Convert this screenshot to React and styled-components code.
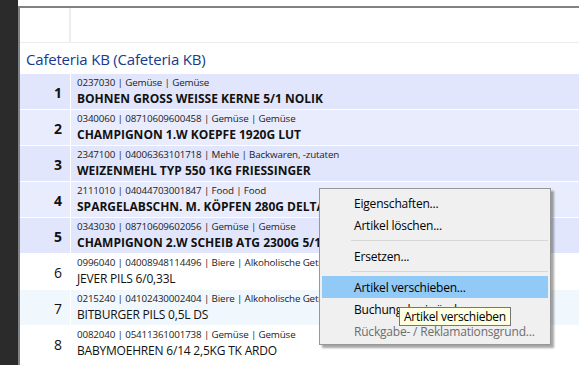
import styled, { createGlobalStyle } from 'styled-components'

const GlobalStyle = createGlobalStyle`
  html, body {
    margin: 0;
    padding: 0;
    height: 100%;
    overflow: hidden;
  }
  body {
    background: #ffffff;
    font-family: 'Open Sans', 'Noto Sans', sans-serif;
  }
`

const Page = styled.div`
  display: flex;
  width: 579px;
  height: 365px;
  overflow: hidden;
  position: relative;
`

const Sidebar = styled.div`
  width: 18px;
  flex-shrink: 0;
  background: #2b2b2b;
`

const Panel = styled.div`
  flex: 1;
  padding-top: 6px;
  background: #ffffff;
  min-width: 0;
`

const Frame = styled.div`
  border-top: 2px solid #7f8386;
  border-left: 2px solid #7f8386;
  height: 100%;
`

const HeaderRow = styled.div`
  display: grid;
  grid-template-columns: 51px 1fr;
  height: 34px;
  border-bottom: 1px solid #ececec;
`

const HeaderCell = styled.div`
  border-right: ${p => (p.$divider ? '2px solid #ececec' : 'none')};
`

const Title = styled.div`
  height: 31px;
  display: flex;
  align-items: center;
  padding-left: 6px;
  padding-top: 1px;
  box-sizing: border-box;
  font-size: 15px;
  color: #183a8c;
  letter-spacing: -0.2px;
`

const Row = styled.div`
  display: grid;
  grid-template-columns: 51px 1fr;
  height: 35px;
  border-bottom: 1px solid #ffffff;
  background: ${p => p.$bg};
`

const Num = styled.div`
  display: flex;
  align-items: center;
  justify-content: flex-end;
  padding-right: 8px;
  padding-top: 2px;
  font-size: 14px;
  font-weight: ${p => (p.$bold ? 700 : 400)};
  color: #111;
  border-right: 1px solid #ffffff;
`

const Content = styled.div`
  display: flex;
  flex-direction: column;
  justify-content: center;
  padding-left: 6px;
  white-space: nowrap;
  overflow: hidden;
`

const Code = styled.div`
  font-size: 9.8px;
  line-height: 14px;
  color: #222;
  letter-spacing: -0.15px;
`

const Name = styled.div`
  font-size: 12px;
  line-height: 17px;
  font-weight: ${p => (p.$bold ? 700 : 400)};
  color: #111;
  letter-spacing: ${p => (p.$bold ? '0px' : '-0.2px')};
`

const Menu = styled.div`
  position: absolute;
  left: 319px;
  top: 188px;
  width: 226px;
  padding: 3px 2px 2px;
  background: #f0f0f0;
  border: 1px solid #979797;
  box-shadow: 3px 3px 2px rgba(0, 0, 0, 0.35);
`

const MenuItem = styled.div`
  height: 22px;
  display: flex;
  align-items: center;
  padding-left: 32px;
  font-size: 12px;
  letter-spacing: -0.2px;
  color: ${p => (p.$disabled ? '#6d6d6d' : '#000')};
  background: ${p => (p.$active ? '#91c9f7' : 'transparent')};
  white-space: nowrap;
`

const Separator = styled.div`
  height: 9px;
  display: flex;
  align-items: center;
  padding-left: 29px;

  &::after {
    content: '';
    flex: 1;
    height: 1px;
    background: #d7d7d7;
  }
`

const Tooltip = styled.div`
  position: absolute;
  left: 399px;
  top: 307px;
  height: 17px;
  padding: 0 4px;
  display: flex;
  align-items: center;
  background: #ffffe1;
  border: 1px solid #767676;
  font-size: 12px;
  letter-spacing: -0.25px;
  color: #000;
  white-space: nowrap;
`

const items = [
  { code: '0237030 | Gemüse | Gemüse', name: 'BOHNEN GROSS WEISSE KERNE 5/1 NOLIK', bold: true, bg: '#e1e6fc' },
  { code: '0340060 | 08710609600458 | Gemüse | Gemüse', name: 'CHAMPIGNON 1.W KOEPFE 1920G LUT', bold: true, bg: '#e9ecfd' },
  { code: '2347100 | 04006363101718 | Mehle | Backwaren, -zutaten', name: 'WEIZENMEHL TYP 550 1KG FRIESSINGER', bold: true, bg: '#e1e6fc' },
  { code: '2111010 | 04044703001847 | Food | Food', name: 'SPARGELABSCHN. M. KÖPFEN 280G DELTA', bold: true, bg: '#e9ecfd' },
  { code: '0343030 | 08710609602056 | Gemüse | Gemüse', name: 'CHAMPIGNON 2.W SCHEIB ATG 2300G 5/1', bold: true, bg: '#e1e6fc' },
  { code: '0996040 | 04008948114496 | Biere | Alkoholische Getränke', name: 'JEVER PILS 6/0,33L', bold: false, bg: '#ffffff' },
  { code: '0215240 | 04102430002404 | Biere | Alkoholische Getränke', name: 'BITBURGER PILS 0,5L DS', bold: false, bg: '#f0f7fd' },
  { code: '0082040 | 05411361001738 | Gemüse | Gemüse', name: 'BABYMOEHREN 6/14 2,5KG TK ARDO', bold: false, bg: '#ffffff' },
  { code: '', name: '', bold: false, bg: '#ffffff' },
]

export default function App() {
  return (
    <>
      <GlobalStyle />
      <Page>
        <Sidebar />
        <Panel>
          <Frame>
            <HeaderRow>
              <HeaderCell $divider />
              <HeaderCell />
            </HeaderRow>
            <Title>Cafeteria KB (Cafeteria KB)</Title>
            {items.map((item, i) => (
              <Row key={i} $bg={item.bg}>
                <Num $bold={item.bold}>{item.code ? i + 1 : ''}</Num>
                <Content>
                  <Code>{item.code}</Code>
                  <Name $bold={item.bold}>{item.name}</Name>
                </Content>
              </Row>
            ))}
          </Frame>
        </Panel>

        <Menu>
          <MenuItem>Eigenschaften...</MenuItem>
          <MenuItem>Artikel löschen...</MenuItem>
          <Separator />
          <MenuItem>Ersetzen...</MenuItem>
          <Separator />
          <MenuItem $active>Artikel verschieben...</MenuItem>
          <MenuItem>Buchungskreis ändern...</MenuItem>
          <MenuItem $disabled>Rückgabe- / Reklamationsgrund...</MenuItem>
        </Menu>
        <Tooltip>Artikel verschieben</Tooltip>
      </Page>
    </>
  )
}
